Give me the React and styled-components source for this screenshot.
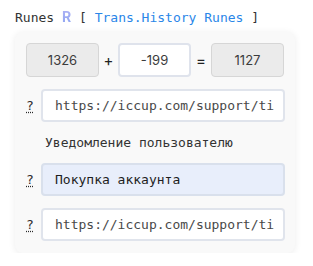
import React from "react";
import styled, { createGlobalStyle } from "styled-components";

const GlobalStyle = createGlobalStyle`
  body {
    margin: 0;
    background: #ffffff;
    font-family: "DejaVu Sans Mono", "Liberation Mono", monospace;
  }
`;

const Page = styled.div`
  padding: 8px 18px 0 15px;
  width: 313px;
  box-sizing: border-box;
`;

const Title = styled.div`
  font-size: 13px;
  line-height: 18px;
  color: #333;
  white-space: pre;
  margin-bottom: 5px;
`;

const RuneMark = styled.span`
  font-family: "Inter", "Liberation Sans", sans-serif;
  font-weight: 700;
  font-size: 14px;
  background: linear-gradient(180deg, #b0b2f4 0%, #8ea6f2 100%);
  -webkit-background-clip: text;
  background-clip: text;
  color: transparent;
`;

const Link = styled.span`
  color: #2a86e8;
`;

const Card = styled.div`
  background: #f9f9f9;
  border-radius: 8px;
  box-shadow: 0 1px 7px rgba(0, 0, 0, 0.08);
  padding: 11px 10px 12px 11px;
  display: flex;
  flex-direction: column;
  gap: 12px;
`;

const CalcRow = styled.div`
  display: grid;
  grid-template-columns: 73px 19px 73px 20px 73px;
  align-items: center;
  height: 34px;
`;

const NumBox = styled.div`
  height: 34px;
  box-sizing: border-box;
  border-radius: 4px;
  border: ${(p) => (p.$editable ? "2px solid #dfe3ec" : "1px solid #d6d6d6")};
  background: ${(p) => (p.$editable ? "#ffffff" : "#ebebeb")};
  display: flex;
  align-items: center;
  justify-content: center;
  font-family: "Inter", "Liberation Sans", sans-serif;
  font-size: 13px;
  color: #3c3c3c;
`;

const Op = styled.div`
  text-align: center;
  font-family: "Inter", "Liberation Sans", sans-serif;
  font-size: 15px;
  color: #222;
`;

const FieldRow = styled.div`
  display: grid;
  grid-template-columns: 15px 1fr;
  align-items: center;
  height: 33px;
`;

const Hint = styled.span`
  font-size: 13px;
  color: #2a2a2a;
  text-decoration: underline dotted;
  text-underline-offset: 2px;
  cursor: help;
  justify-self: start;
`;

const Field = styled.div`
  height: 33px;
  box-sizing: border-box;
  border: 2px solid ${(p) => (p.$active ? "#d9e0ec" : "#e0e4ec")};
  border-radius: 4px;
  background: ${(p) => (p.$active ? "#e8eefb" : "#ffffff")};
  padding: 0 12px;
  display: flex;
  align-items: center;
  font-size: 13px;
  color: ${(p) => (p.$active ? "#1e1e1e" : "#484848")};
  white-space: nowrap;
  overflow: hidden;
`;

const Label = styled.div`
  height: 17px;
  line-height: 17px;
  padding-left: 19px;
  font-size: 13px;
  color: #333;
`;

export default function App() {
  return (
    <Page>
      <GlobalStyle />
      <Title>
        Runes <RuneMark>R</RuneMark> [ <Link>Trans.History Runes</Link> ]
      </Title>
      <Card>
        <CalcRow>
          <NumBox>1326</NumBox>
          <Op>+</Op>
          <NumBox $editable>-199</NumBox>
          <Op>=</Op>
          <NumBox>1127</NumBox>
        </CalcRow>
        <FieldRow>
          <Hint>?</Hint>
          <Field>https://iccup.com/support/ti</Field>
        </FieldRow>
        <Label>Уведомление пользователю</Label>
        <FieldRow>
          <Hint>?</Hint>
          <Field $active>Покупка аккаунта</Field>
        </FieldRow>
        <FieldRow>
          <Hint>?</Hint>
          <Field>https://iccup.com/support/ti</Field>
        </FieldRow>
      </Card>
    </Page>
  );
}
